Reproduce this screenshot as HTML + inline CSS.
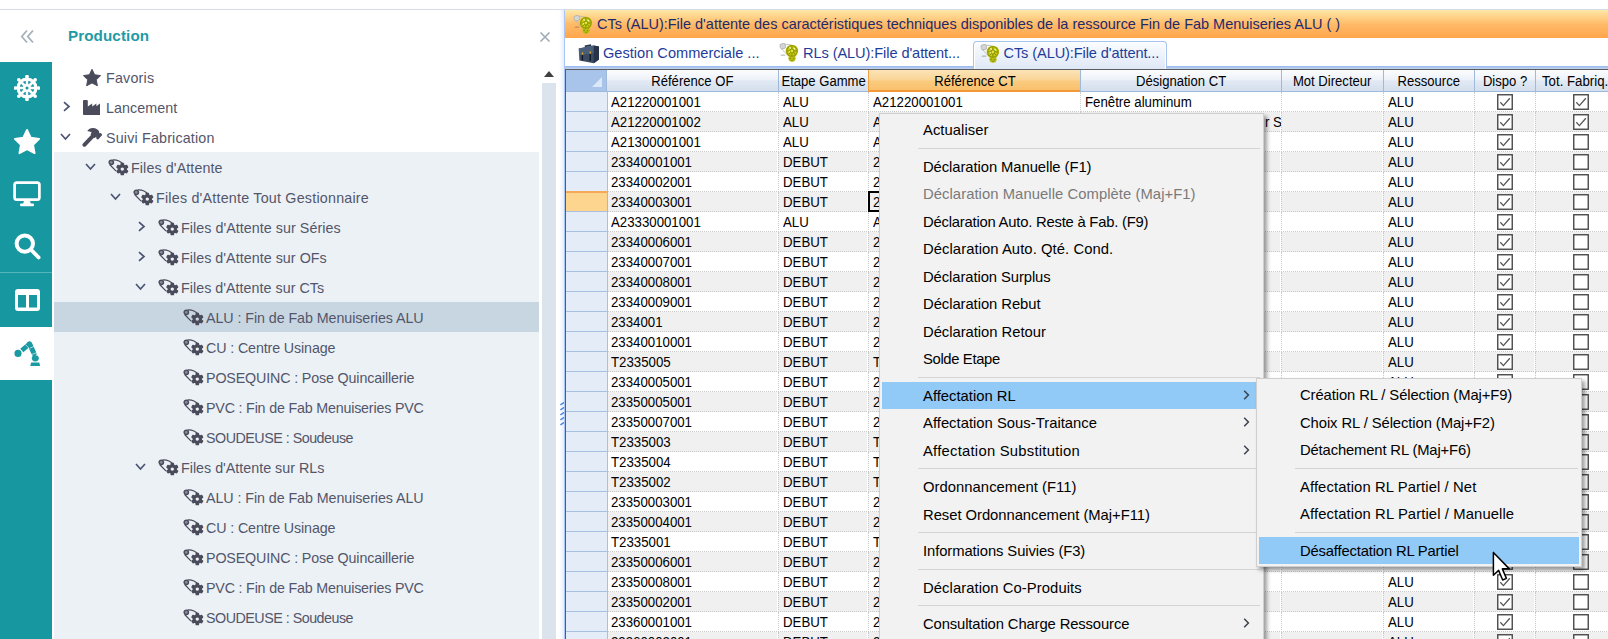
<!DOCTYPE html>
<html><head><meta charset="utf-8"><title>Production</title>
<style>
*{box-sizing:border-box;margin:0;padding:0}
html,body{width:1608px;height:639px;overflow:hidden;background:#fff}
body{position:relative;font-family:"Liberation Sans",sans-serif;font-size:14px;color:#4a4c5b}
.abs{position:absolute}
#topline{left:0;top:9px;width:1608px;height:1px;background:#d3dde8}
/* left nav */
#nav{left:0;top:62px;width:52px;height:577px;background:#17979f}
#nav .sep{position:absolute;left:0;top:210px;width:52px;height:1px;background:#56b5bb}
#nav .act{position:absolute;left:0;top:265px;width:52px;height:53px;background:#fff}
#nav svg{position:absolute}
#title{left:68px;top:26px;font-weight:bold;font-size:15.2px;color:#1f9aa6;line-height:20px;letter-spacing:.1px}
/* tree */
#treebg{left:54px;top:152px;width:485px;height:487px;background:#ecf1f6}
.tr{position:absolute;left:54px;width:485px;height:30px}
.tr.sel{background:#c8d6e2}
.tr span{position:absolute}
.tr .tx{top:1px;line-height:30px;font-size:14.3px;white-space:nowrap;color:#53566a;margin-left:-54px}
.tr .icw{top:0;height:30px;margin-left:-54px;display:flex;align-items:center}
.tr .chw{top:-1px;height:30px;margin-left:-54px;display:flex;align-items:center}
#sbthumb{left:542px;top:83px;width:14px;height:556px;background:#dbe4ed}
#sbarrow{left:544px;top:71px;width:0;height:0;border-left:5px solid transparent;border-right:5px solid transparent;border-bottom:6.5px solid #404040}
/* right panel */
#rp{left:564px;top:10px;width:1044px;height:629px;border-left:1px solid #a9c6f5}
#oh{left:565px;top:10px;width:1043px;height:29px;background:linear-gradient(#ffe8a8 0%,#ffd48a 22%,#ffba68 50%,#ffa54a 96.5%,#ffd3a6 96.6%)}
#oh .t{position:absolute;left:32px;top:0;height:28px;line-height:29px;font-size:14.5px;letter-spacing:-.017px;color:#1f2a6b;white-space:nowrap}
#tabs{left:565px;top:38px;width:1043px;height:28px;background:#fff}
#tabline{left:565px;top:66px;width:1043px;height:3px;background:linear-gradient(#95b8f0,#c4d4ee)}
.tab{position:absolute;top:0;height:30px;line-height:31px;font-size:14.6px;color:#1f3c9c;white-space:nowrap}
#atab{left:973px;top:41px;width:194px;height:28px;border:1px solid #a6c4ee;border-bottom:none;border-radius:4px 4px 0 0;background:linear-gradient(#f8fbff 10%,#dfe8f6);box-shadow:inset 1px 1px 0 #fff,inset -1px 0 0 #fff}
/* grid */
#grid{left:565px;top:69px;width:1043px;height:570px;border-left:1px solid #5c5c5c;border-top:1px solid #5c5c5c;overflow:hidden;background:#fff;box-shadow:inset 1px 1px 0 #d3deef}
#gin{position:absolute;left:-1px;top:-1px;width:1100px;height:600px}
.n{display:inline-block;transform:scaleX(0.86);transform-origin:0 50%;white-space:nowrap;font-size:15.4px;color:#000}
.nc{transform-origin:50% 50%;transform:scaleX(.85)}
.h{position:absolute;top:1px;height:22px;border-left:1px solid #9fb9dc;border-bottom:1px solid #9fb9dc;background:linear-gradient(#fbfcfe 0%,#edf2f9 45%,#e1e9f4 52%,#d4dfed 100%);text-align:center;line-height:22px;overflow:hidden;display:flex;justify-content:center}
.h.ho{background:linear-gradient(#fce4b8 0%,#fbd596 48%,#facb80 55%,#f9c06c 100%);border-left:1px solid #f0a040;border-bottom:2px solid #f29a3a;line-height:22px}
#hsel{position:absolute;left:1px;top:1px;width:41px;height:22px;background:#a9c4ea;border-bottom:1px solid #9fb9dc}
#hsel:after{content:"";position:absolute;right:5px;bottom:4px;border-left:10px solid transparent;border-bottom:10px solid #dce8f7}
.gr{position:absolute;left:0;width:1100px;height:20px}
.gr.alt .c{background:#f0f0f0}
.rh{position:absolute;left:1px;top:0;width:42px;height:20px;background:#e4ecf7;border-bottom:1px solid #a9c0e0;border-right:1.5px solid #a9c0e0;z-index:2}
.rh.cur{background:#fed58f;border-top:2px solid #f5a855;border-right:1.5px solid #f5a855;top:-1px;height:21px}
.c{position:absolute;top:0;height:20px;line-height:20px;padding-left:3.6px;overflow:hidden;border-bottom:1px dotted #cacaca;border-left:1px dotted #cacaca;margin-left:-1px}
.c.cc{padding:0;text-align:center}
.cb{margin-top:2px;margin-left:0}
/* menus */
.menu{background:#f2f2f2;border:1px solid #cfcfcf;box-shadow:3px 3px 4px rgba(0,0,0,.38);padding:2px 2px;font-size:14.8px;color:#000}
.mi{position:relative;height:27.5px;line-height:29px;padding-left:41px;white-space:nowrap}
.sub .mi{padding-left:41px}
.mi.dis{color:#7a7a7a}
.mi.hl{background:#91c9f7}
.mi .ar{position:absolute;right:11.2px;top:8.2px}
.ms{height:9px;position:relative}
.ms:after{content:"";position:absolute;left:36px;right:1px;top:4px;height:1px;background:#d4d4d4}
</style></head><body>
<div id="topline" class="abs"></div>

<!-- collapse icon + title + close -->
<svg class="abs" style="left:20px;top:29px" width="15" height="15" viewBox="0 0 15 15"><path d="M7 1.5L1.8 7.5 7 13.5M13 1.5L7.8 7.5 13 13.5" fill="none" stroke="#a6b0bb" stroke-width="1.8"/></svg>
<div id="title" class="abs">Production</div>
<svg class="abs" style="left:539px;top:31px" width="12" height="12" viewBox="0 0 12 12"><path d="M1.5 1.5l9 9M10.5 1.5l-9 9" stroke="#a0abb7" stroke-width="1.6"/></svg>

<!-- nav bar -->
<div id="nav" class="abs">
 <div class="sep"></div><div class="act"></div>
 <!-- wheel -->
 <svg style="left:14px;top:13px" width="26" height="26" viewBox="-13 -13 26 26">
  <g stroke="#fff" fill="none"><circle r="8.9" stroke-width="3.2"/>
  <g stroke-width="2.5"><path d="M0-12V12M-12 0H12M-8.5-8.5L8.5 8.5M-8.5 8.5L8.5-8.5"/></g></g>
  <circle r="3.9" fill="#fff"/>
  <g fill="#fff"><circle cx="0" cy="-11.5" r="1.8"/><circle cx="0" cy="11.5" r="1.8"/><circle cx="-11.5" cy="0" r="1.8"/><circle cx="11.5" cy="0" r="1.8"/>
  <circle cx="8.2" cy="8.2" r="1.8"/><circle cx="-8.2" cy="8.2" r="1.8"/><circle cx="8.2" cy="-8.2" r="1.8"/><circle cx="-8.2" cy="-8.2" r="1.8"/></g>
  <circle r="1.5" fill="#17979f"/>
 </svg>
 <!-- star -->
 <svg style="left:13px;top:66px" width="28" height="27" viewBox="0 0 24 23"><path d="M12 1.6l3.2 6.6 7.2 1-5.2 5.1 1.3 7.2-6.5-3.4-6.5 3.4 1.3-7.2L1.6 9.2l7.2-1z" fill="#fff" stroke="#fff" stroke-width="1.6" stroke-linejoin="round"/></svg>
 <!-- monitor -->
 <svg style="left:13px;top:119px" width="28" height="26" viewBox="0 0 28 26"><rect x="1.6" y="1.6" width="24.8" height="17" rx="2.2" fill="none" stroke="#fff" stroke-width="2.7"/><path d="M11 19.5h6l.8 3.4h-7.6z" fill="#fff"/><rect x="7" y="22.4" width="14" height="2.8" rx="1.2" fill="#fff"/></svg>
 <!-- search -->
 <svg style="left:14px;top:171px" width="27" height="27" viewBox="0 0 27 27"><circle cx="10.8" cy="10.6" r="8.2" fill="none" stroke="#fff" stroke-width="4"/><path d="M17.4 17.2l7.2 7.2" stroke="#fff" stroke-width="3.8" stroke-linecap="round"/></svg>
 <!-- columns -->
 <svg style="left:15px;top:227px" width="25" height="22" viewBox="0 0 25 22"><rect x="0" y="0" width="25" height="22" rx="3" fill="#fff"/><rect x="3" y="6" width="8" height="12.5" fill="#17979f"/><rect x="14" y="6" width="8" height="12.5" fill="#17979f"/></svg>
 <!-- robot arm -->
 <svg style="left:13px;top:278px" width="28" height="28" viewBox="0 0 28 28">
  <g fill="#1b9aa3" stroke="none"><circle cx="5" cy="13.4" r="3.55"/><ellipse cx="22.3" cy="18.3" rx="3.5" ry="3.1"/><path d="M18.1 22.5h8.2l.8 3.5h-9.8z"/></g>
  <g stroke="#1b9aa3" fill="none"><path d="M8.8 10.5L16.4 4" stroke-width="4.8"/><path d="M16.6 3.8L21 13.6" stroke-width="5" stroke-linecap="round"/></g>
  <g stroke="#fff" stroke-width=".7" opacity=".85"><path d="M12.4 4.6l3.6 3.6M16.6 8.4l4.6-2.2M17.6 14.9l6.4-2.4"/></g>
 </svg>
</div>

<!-- tree -->
<div id="treebg" class="abs"></div>
<div class="tr" style="top:62px"><span class="icw" style="left:82px"><svg class="ti" width="20" height="19" viewBox="0 0 24 23"><path d="M12 1.6l3.2 6.6 7.2 1-5.2 5.1 1.3 7.2-6.5-3.4-6.5 3.4 1.3-7.2L1.6 9.2l7.2-1z" fill="#4a4c5b" stroke="#4a4c5b" stroke-width="1.2" stroke-linejoin="round"/></svg></span><span class="tx" style="left:106px;letter-spacing:0.2px">Favoris</span></div>
<div class="tr" style="top:92px"><span class="chw" style="left:61.5px"><svg class="ch" width="9" height="11" viewBox="0 0 9 11"><path d="M2 1.2l5 4.3-5 4.3" fill="none" stroke="#4b5473" stroke-width="1.7"/></svg></span><span class="icw" style="left:82px"><svg class="ti" style="margin-left:.8px;margin-top:1px" width="17.5" height="15" viewBox="0 0 17.5 15"><path d="M.9 0h3a.9.9 0 0 1 .9.9V6.4L9.2 3.5v2.9L13.4 3.6v2.7L17.5 3.1V14.1a.9.9 0 0 1-.9.9H.9a.9.9 0 0 1-.9-.9V.9A.9.9 0 0 1 .9 0z" fill="#4a4c5b"/></svg></span><span class="tx" style="left:106px;letter-spacing:0.05px">Lancement</span></div>
<div class="tr" style="top:122px"><span class="chw" style="left:60px"><svg class="ch" width="11" height="9" viewBox="0 0 11 9"><path d="M1 2l4.5 5 4.5-5" fill="none" stroke="#4b5473" stroke-width="1.7"/></svg></span><span class="icw" style="left:82px"><svg class="ti" style="margin-top:1px" width="20" height="19" viewBox="0 0 20 19"><path d="M11.4 7.4L2.4 16.8" stroke="#4a4c5b" stroke-width="3.9" stroke-linecap="round"/><path d="M6.2 2.7C8.5.5 12.6-.2 15.6 2.5l1 1.3-.2 1.3 1 1 1-.4 1.1 1.1-3.6 4.1-1.1-1 .3-1.1-.9-1-1.6 1.6-3.3-3.2 1.3-1.6C9.6 3.5 8 2.9 6.2 2.7z" fill="#4a4c5b" stroke="#4a4c5b" stroke-width="1.3" stroke-linejoin="round"/></svg></span><span class="tx" style="left:106px;letter-spacing:0.17px">Suivi Fabrication</span></div>
<div class="tr" style="top:152px"><span class="chw" style="left:85px"><svg class="ch" width="11" height="9" viewBox="0 0 11 9"><path d="M1 2l4.5 5 4.5-5" fill="none" stroke="#4b5473" stroke-width="1.7"/></svg></span><span class="icw" style="left:107px"><svg class="ti" width="22" height="20" viewBox="0 0 22 20"><path d="M6.0 2.9 Q12 2.6 16.6 7.4" fill="none" stroke="#4a4c5b" stroke-width="1.25" stroke-linecap="round"/><path d="M2.9 7.8 L8.6 13.6" fill="none" stroke="#4a4c5b" stroke-width="1.25" stroke-linecap="round"/><circle cx="4.3" cy="5.3" r="2.15" fill="#8a8d9a" stroke="#4a4c5b" stroke-width="1.5"/><path d="M14.02 8.31 L14.31 6.59 L16.29 6.59 L16.58 8.31 L17.95 9.10 L19.58 8.49 L20.57 10.20 L19.22 11.31 L19.22 12.89 L20.57 14.00 L19.58 15.71 L17.95 15.10 L16.58 15.89 L16.29 17.61 L14.31 17.61 L14.02 15.89 L12.65 15.10 L11.02 15.71 L10.03 14.00 L11.38 12.89 L11.38 11.31 L10.03 10.20 L11.02 8.49 L12.65 9.10Z" fill="#4a4c5b" stroke="#4a4c5b" stroke-width="1.5" stroke-linejoin="round"/><circle cx="15.3" cy="12.1" r="1.7" fill="#ecf1f6"/></svg></span><span class="tx" style="left:131px;letter-spacing:0.1px">Files d'Attente</span></div>
<div class="tr" style="top:182px"><span class="chw" style="left:110px"><svg class="ch" width="11" height="9" viewBox="0 0 11 9"><path d="M1 2l4.5 5 4.5-5" fill="none" stroke="#4b5473" stroke-width="1.7"/></svg></span><span class="icw" style="left:132px"><svg class="ti" width="22" height="20" viewBox="0 0 22 20"><path d="M6.0 2.9 Q12 2.6 16.6 7.4" fill="none" stroke="#4a4c5b" stroke-width="1.25" stroke-linecap="round"/><path d="M2.9 7.8 L8.6 13.6" fill="none" stroke="#4a4c5b" stroke-width="1.25" stroke-linecap="round"/><circle cx="4.3" cy="5.3" r="2.15" fill="#8a8d9a" stroke="#4a4c5b" stroke-width="1.5"/><path d="M14.02 8.31 L14.31 6.59 L16.29 6.59 L16.58 8.31 L17.95 9.10 L19.58 8.49 L20.57 10.20 L19.22 11.31 L19.22 12.89 L20.57 14.00 L19.58 15.71 L17.95 15.10 L16.58 15.89 L16.29 17.61 L14.31 17.61 L14.02 15.89 L12.65 15.10 L11.02 15.71 L10.03 14.00 L11.38 12.89 L11.38 11.31 L10.03 10.20 L11.02 8.49 L12.65 9.10Z" fill="#4a4c5b" stroke="#4a4c5b" stroke-width="1.5" stroke-linejoin="round"/><circle cx="15.3" cy="12.1" r="1.7" fill="#ecf1f6"/></svg></span><span class="tx" style="left:156px;letter-spacing:0.215px">Files d'Attente Tout Gestionnaire</span></div>
<div class="tr" style="top:212px"><span class="chw" style="left:136.5px"><svg class="ch" width="9" height="11" viewBox="0 0 9 11"><path d="M2 1.2l5 4.3-5 4.3" fill="none" stroke="#4b5473" stroke-width="1.7"/></svg></span><span class="icw" style="left:157px"><svg class="ti" width="22" height="20" viewBox="0 0 22 20"><path d="M6.0 2.9 Q12 2.6 16.6 7.4" fill="none" stroke="#4a4c5b" stroke-width="1.25" stroke-linecap="round"/><path d="M2.9 7.8 L8.6 13.6" fill="none" stroke="#4a4c5b" stroke-width="1.25" stroke-linecap="round"/><circle cx="4.3" cy="5.3" r="2.15" fill="#8a8d9a" stroke="#4a4c5b" stroke-width="1.5"/><path d="M14.02 8.31 L14.31 6.59 L16.29 6.59 L16.58 8.31 L17.95 9.10 L19.58 8.49 L20.57 10.20 L19.22 11.31 L19.22 12.89 L20.57 14.00 L19.58 15.71 L17.95 15.10 L16.58 15.89 L16.29 17.61 L14.31 17.61 L14.02 15.89 L12.65 15.10 L11.02 15.71 L10.03 14.00 L11.38 12.89 L11.38 11.31 L10.03 10.20 L11.02 8.49 L12.65 9.10Z" fill="#4a4c5b" stroke="#4a4c5b" stroke-width="1.5" stroke-linejoin="round"/><circle cx="15.3" cy="12.1" r="1.7" fill="#ecf1f6"/></svg></span><span class="tx" style="left:181px;letter-spacing:0.045px">Files d'Attente sur Séries</span></div>
<div class="tr" style="top:242px"><span class="chw" style="left:136.5px"><svg class="ch" width="9" height="11" viewBox="0 0 9 11"><path d="M2 1.2l5 4.3-5 4.3" fill="none" stroke="#4b5473" stroke-width="1.7"/></svg></span><span class="icw" style="left:157px"><svg class="ti" width="22" height="20" viewBox="0 0 22 20"><path d="M6.0 2.9 Q12 2.6 16.6 7.4" fill="none" stroke="#4a4c5b" stroke-width="1.25" stroke-linecap="round"/><path d="M2.9 7.8 L8.6 13.6" fill="none" stroke="#4a4c5b" stroke-width="1.25" stroke-linecap="round"/><circle cx="4.3" cy="5.3" r="2.15" fill="#8a8d9a" stroke="#4a4c5b" stroke-width="1.5"/><path d="M14.02 8.31 L14.31 6.59 L16.29 6.59 L16.58 8.31 L17.95 9.10 L19.58 8.49 L20.57 10.20 L19.22 11.31 L19.22 12.89 L20.57 14.00 L19.58 15.71 L17.95 15.10 L16.58 15.89 L16.29 17.61 L14.31 17.61 L14.02 15.89 L12.65 15.10 L11.02 15.71 L10.03 14.00 L11.38 12.89 L11.38 11.31 L10.03 10.20 L11.02 8.49 L12.65 9.10Z" fill="#4a4c5b" stroke="#4a4c5b" stroke-width="1.5" stroke-linejoin="round"/><circle cx="15.3" cy="12.1" r="1.7" fill="#ecf1f6"/></svg></span><span class="tx" style="left:181px;letter-spacing:0.035px">Files d'Attente sur OFs</span></div>
<div class="tr" style="top:272px"><span class="chw" style="left:135px"><svg class="ch" width="11" height="9" viewBox="0 0 11 9"><path d="M1 2l4.5 5 4.5-5" fill="none" stroke="#4b5473" stroke-width="1.7"/></svg></span><span class="icw" style="left:157px"><svg class="ti" width="22" height="20" viewBox="0 0 22 20"><path d="M6.0 2.9 Q12 2.6 16.6 7.4" fill="none" stroke="#4a4c5b" stroke-width="1.25" stroke-linecap="round"/><path d="M2.9 7.8 L8.6 13.6" fill="none" stroke="#4a4c5b" stroke-width="1.25" stroke-linecap="round"/><circle cx="4.3" cy="5.3" r="2.15" fill="#8a8d9a" stroke="#4a4c5b" stroke-width="1.5"/><path d="M14.02 8.31 L14.31 6.59 L16.29 6.59 L16.58 8.31 L17.95 9.10 L19.58 8.49 L20.57 10.20 L19.22 11.31 L19.22 12.89 L20.57 14.00 L19.58 15.71 L17.95 15.10 L16.58 15.89 L16.29 17.61 L14.31 17.61 L14.02 15.89 L12.65 15.10 L11.02 15.71 L10.03 14.00 L11.38 12.89 L11.38 11.31 L10.03 10.20 L11.02 8.49 L12.65 9.10Z" fill="#4a4c5b" stroke="#4a4c5b" stroke-width="1.5" stroke-linejoin="round"/><circle cx="15.3" cy="12.1" r="1.7" fill="#ecf1f6"/></svg></span><span class="tx" style="left:181px;letter-spacing:0.025px">Files d'Attente sur CTs</span></div>
<div class="tr sel" style="top:302px"><span class="icw" style="left:182px"><svg class="ti" width="22" height="20" viewBox="0 0 22 20"><path d="M6.0 2.9 Q12 2.6 16.6 7.4" fill="none" stroke="#4a4c5b" stroke-width="1.25" stroke-linecap="round"/><path d="M2.9 7.8 L8.6 13.6" fill="none" stroke="#4a4c5b" stroke-width="1.25" stroke-linecap="round"/><circle cx="4.3" cy="5.3" r="2.15" fill="#8a8d9a" stroke="#4a4c5b" stroke-width="1.5"/><path d="M14.02 8.31 L14.31 6.59 L16.29 6.59 L16.58 8.31 L17.95 9.10 L19.58 8.49 L20.57 10.20 L19.22 11.31 L19.22 12.89 L20.57 14.00 L19.58 15.71 L17.95 15.10 L16.58 15.89 L16.29 17.61 L14.31 17.61 L14.02 15.89 L12.65 15.10 L11.02 15.71 L10.03 14.00 L11.38 12.89 L11.38 11.31 L10.03 10.20 L11.02 8.49 L12.65 9.10Z" fill="#4a4c5b" stroke="#4a4c5b" stroke-width="1.5" stroke-linejoin="round"/><circle cx="15.3" cy="12.1" r="1.7" fill="#c8d6e2"/></svg></span><span class="tx" style="left:206px;letter-spacing:-0.08px">ALU : Fin de Fab Menuiseries ALU</span></div>
<div class="tr" style="top:332px"><span class="icw" style="left:182px"><svg class="ti" width="22" height="20" viewBox="0 0 22 20"><path d="M6.0 2.9 Q12 2.6 16.6 7.4" fill="none" stroke="#4a4c5b" stroke-width="1.25" stroke-linecap="round"/><path d="M2.9 7.8 L8.6 13.6" fill="none" stroke="#4a4c5b" stroke-width="1.25" stroke-linecap="round"/><circle cx="4.3" cy="5.3" r="2.15" fill="#8a8d9a" stroke="#4a4c5b" stroke-width="1.5"/><path d="M14.02 8.31 L14.31 6.59 L16.29 6.59 L16.58 8.31 L17.95 9.10 L19.58 8.49 L20.57 10.20 L19.22 11.31 L19.22 12.89 L20.57 14.00 L19.58 15.71 L17.95 15.10 L16.58 15.89 L16.29 17.61 L14.31 17.61 L14.02 15.89 L12.65 15.10 L11.02 15.71 L10.03 14.00 L11.38 12.89 L11.38 11.31 L10.03 10.20 L11.02 8.49 L12.65 9.10Z" fill="#4a4c5b" stroke="#4a4c5b" stroke-width="1.5" stroke-linejoin="round"/><circle cx="15.3" cy="12.1" r="1.7" fill="#ecf1f6"/></svg></span><span class="tx" style="left:206px;letter-spacing:-0.135px">CU : Centre Usinage</span></div>
<div class="tr" style="top:362px"><span class="icw" style="left:182px"><svg class="ti" width="22" height="20" viewBox="0 0 22 20"><path d="M6.0 2.9 Q12 2.6 16.6 7.4" fill="none" stroke="#4a4c5b" stroke-width="1.25" stroke-linecap="round"/><path d="M2.9 7.8 L8.6 13.6" fill="none" stroke="#4a4c5b" stroke-width="1.25" stroke-linecap="round"/><circle cx="4.3" cy="5.3" r="2.15" fill="#8a8d9a" stroke="#4a4c5b" stroke-width="1.5"/><path d="M14.02 8.31 L14.31 6.59 L16.29 6.59 L16.58 8.31 L17.95 9.10 L19.58 8.49 L20.57 10.20 L19.22 11.31 L19.22 12.89 L20.57 14.00 L19.58 15.71 L17.95 15.10 L16.58 15.89 L16.29 17.61 L14.31 17.61 L14.02 15.89 L12.65 15.10 L11.02 15.71 L10.03 14.00 L11.38 12.89 L11.38 11.31 L10.03 10.20 L11.02 8.49 L12.65 9.10Z" fill="#4a4c5b" stroke="#4a4c5b" stroke-width="1.5" stroke-linejoin="round"/><circle cx="15.3" cy="12.1" r="1.7" fill="#ecf1f6"/></svg></span><span class="tx" style="left:206px;letter-spacing:-0.157px">POSEQUINC : Pose Quincaillerie</span></div>
<div class="tr" style="top:392px"><span class="icw" style="left:182px"><svg class="ti" width="22" height="20" viewBox="0 0 22 20"><path d="M6.0 2.9 Q12 2.6 16.6 7.4" fill="none" stroke="#4a4c5b" stroke-width="1.25" stroke-linecap="round"/><path d="M2.9 7.8 L8.6 13.6" fill="none" stroke="#4a4c5b" stroke-width="1.25" stroke-linecap="round"/><circle cx="4.3" cy="5.3" r="2.15" fill="#8a8d9a" stroke="#4a4c5b" stroke-width="1.5"/><path d="M14.02 8.31 L14.31 6.59 L16.29 6.59 L16.58 8.31 L17.95 9.10 L19.58 8.49 L20.57 10.20 L19.22 11.31 L19.22 12.89 L20.57 14.00 L19.58 15.71 L17.95 15.10 L16.58 15.89 L16.29 17.61 L14.31 17.61 L14.02 15.89 L12.65 15.10 L11.02 15.71 L10.03 14.00 L11.38 12.89 L11.38 11.31 L10.03 10.20 L11.02 8.49 L12.65 9.10Z" fill="#4a4c5b" stroke="#4a4c5b" stroke-width="1.5" stroke-linejoin="round"/><circle cx="15.3" cy="12.1" r="1.7" fill="#ecf1f6"/></svg></span><span class="tx" style="left:206px;letter-spacing:-0.2px">PVC : Fin de Fab Menuiseries PVC</span></div>
<div class="tr" style="top:422px"><span class="icw" style="left:182px"><svg class="ti" width="22" height="20" viewBox="0 0 22 20"><path d="M6.0 2.9 Q12 2.6 16.6 7.4" fill="none" stroke="#4a4c5b" stroke-width="1.25" stroke-linecap="round"/><path d="M2.9 7.8 L8.6 13.6" fill="none" stroke="#4a4c5b" stroke-width="1.25" stroke-linecap="round"/><circle cx="4.3" cy="5.3" r="2.15" fill="#8a8d9a" stroke="#4a4c5b" stroke-width="1.5"/><path d="M14.02 8.31 L14.31 6.59 L16.29 6.59 L16.58 8.31 L17.95 9.10 L19.58 8.49 L20.57 10.20 L19.22 11.31 L19.22 12.89 L20.57 14.00 L19.58 15.71 L17.95 15.10 L16.58 15.89 L16.29 17.61 L14.31 17.61 L14.02 15.89 L12.65 15.10 L11.02 15.71 L10.03 14.00 L11.38 12.89 L11.38 11.31 L10.03 10.20 L11.02 8.49 L12.65 9.10Z" fill="#4a4c5b" stroke="#4a4c5b" stroke-width="1.5" stroke-linejoin="round"/><circle cx="15.3" cy="12.1" r="1.7" fill="#ecf1f6"/></svg></span><span class="tx" style="left:206px;letter-spacing:-0.5px">SOUDEUSE : Soudeuse</span></div>
<div class="tr" style="top:452px"><span class="chw" style="left:135px"><svg class="ch" width="11" height="9" viewBox="0 0 11 9"><path d="M1 2l4.5 5 4.5-5" fill="none" stroke="#4b5473" stroke-width="1.7"/></svg></span><span class="icw" style="left:157px"><svg class="ti" width="22" height="20" viewBox="0 0 22 20"><path d="M6.0 2.9 Q12 2.6 16.6 7.4" fill="none" stroke="#4a4c5b" stroke-width="1.25" stroke-linecap="round"/><path d="M2.9 7.8 L8.6 13.6" fill="none" stroke="#4a4c5b" stroke-width="1.25" stroke-linecap="round"/><circle cx="4.3" cy="5.3" r="2.15" fill="#8a8d9a" stroke="#4a4c5b" stroke-width="1.5"/><path d="M14.02 8.31 L14.31 6.59 L16.29 6.59 L16.58 8.31 L17.95 9.10 L19.58 8.49 L20.57 10.20 L19.22 11.31 L19.22 12.89 L20.57 14.00 L19.58 15.71 L17.95 15.10 L16.58 15.89 L16.29 17.61 L14.31 17.61 L14.02 15.89 L12.65 15.10 L11.02 15.71 L10.03 14.00 L11.38 12.89 L11.38 11.31 L10.03 10.20 L11.02 8.49 L12.65 9.10Z" fill="#4a4c5b" stroke="#4a4c5b" stroke-width="1.5" stroke-linejoin="round"/><circle cx="15.3" cy="12.1" r="1.7" fill="#ecf1f6"/></svg></span><span class="tx" style="left:181px;letter-spacing:0px">Files d'Attente sur RLs</span></div>
<div class="tr" style="top:482px"><span class="icw" style="left:182px"><svg class="ti" width="22" height="20" viewBox="0 0 22 20"><path d="M6.0 2.9 Q12 2.6 16.6 7.4" fill="none" stroke="#4a4c5b" stroke-width="1.25" stroke-linecap="round"/><path d="M2.9 7.8 L8.6 13.6" fill="none" stroke="#4a4c5b" stroke-width="1.25" stroke-linecap="round"/><circle cx="4.3" cy="5.3" r="2.15" fill="#8a8d9a" stroke="#4a4c5b" stroke-width="1.5"/><path d="M14.02 8.31 L14.31 6.59 L16.29 6.59 L16.58 8.31 L17.95 9.10 L19.58 8.49 L20.57 10.20 L19.22 11.31 L19.22 12.89 L20.57 14.00 L19.58 15.71 L17.95 15.10 L16.58 15.89 L16.29 17.61 L14.31 17.61 L14.02 15.89 L12.65 15.10 L11.02 15.71 L10.03 14.00 L11.38 12.89 L11.38 11.31 L10.03 10.20 L11.02 8.49 L12.65 9.10Z" fill="#4a4c5b" stroke="#4a4c5b" stroke-width="1.5" stroke-linejoin="round"/><circle cx="15.3" cy="12.1" r="1.7" fill="#ecf1f6"/></svg></span><span class="tx" style="left:206px;letter-spacing:-0.08px">ALU : Fin de Fab Menuiseries ALU</span></div>
<div class="tr" style="top:512px"><span class="icw" style="left:182px"><svg class="ti" width="22" height="20" viewBox="0 0 22 20"><path d="M6.0 2.9 Q12 2.6 16.6 7.4" fill="none" stroke="#4a4c5b" stroke-width="1.25" stroke-linecap="round"/><path d="M2.9 7.8 L8.6 13.6" fill="none" stroke="#4a4c5b" stroke-width="1.25" stroke-linecap="round"/><circle cx="4.3" cy="5.3" r="2.15" fill="#8a8d9a" stroke="#4a4c5b" stroke-width="1.5"/><path d="M14.02 8.31 L14.31 6.59 L16.29 6.59 L16.58 8.31 L17.95 9.10 L19.58 8.49 L20.57 10.20 L19.22 11.31 L19.22 12.89 L20.57 14.00 L19.58 15.71 L17.95 15.10 L16.58 15.89 L16.29 17.61 L14.31 17.61 L14.02 15.89 L12.65 15.10 L11.02 15.71 L10.03 14.00 L11.38 12.89 L11.38 11.31 L10.03 10.20 L11.02 8.49 L12.65 9.10Z" fill="#4a4c5b" stroke="#4a4c5b" stroke-width="1.5" stroke-linejoin="round"/><circle cx="15.3" cy="12.1" r="1.7" fill="#ecf1f6"/></svg></span><span class="tx" style="left:206px;letter-spacing:-0.135px">CU : Centre Usinage</span></div>
<div class="tr" style="top:542px"><span class="icw" style="left:182px"><svg class="ti" width="22" height="20" viewBox="0 0 22 20"><path d="M6.0 2.9 Q12 2.6 16.6 7.4" fill="none" stroke="#4a4c5b" stroke-width="1.25" stroke-linecap="round"/><path d="M2.9 7.8 L8.6 13.6" fill="none" stroke="#4a4c5b" stroke-width="1.25" stroke-linecap="round"/><circle cx="4.3" cy="5.3" r="2.15" fill="#8a8d9a" stroke="#4a4c5b" stroke-width="1.5"/><path d="M14.02 8.31 L14.31 6.59 L16.29 6.59 L16.58 8.31 L17.95 9.10 L19.58 8.49 L20.57 10.20 L19.22 11.31 L19.22 12.89 L20.57 14.00 L19.58 15.71 L17.95 15.10 L16.58 15.89 L16.29 17.61 L14.31 17.61 L14.02 15.89 L12.65 15.10 L11.02 15.71 L10.03 14.00 L11.38 12.89 L11.38 11.31 L10.03 10.20 L11.02 8.49 L12.65 9.10Z" fill="#4a4c5b" stroke="#4a4c5b" stroke-width="1.5" stroke-linejoin="round"/><circle cx="15.3" cy="12.1" r="1.7" fill="#ecf1f6"/></svg></span><span class="tx" style="left:206px;letter-spacing:-0.157px">POSEQUINC : Pose Quincaillerie</span></div>
<div class="tr" style="top:572px"><span class="icw" style="left:182px"><svg class="ti" width="22" height="20" viewBox="0 0 22 20"><path d="M6.0 2.9 Q12 2.6 16.6 7.4" fill="none" stroke="#4a4c5b" stroke-width="1.25" stroke-linecap="round"/><path d="M2.9 7.8 L8.6 13.6" fill="none" stroke="#4a4c5b" stroke-width="1.25" stroke-linecap="round"/><circle cx="4.3" cy="5.3" r="2.15" fill="#8a8d9a" stroke="#4a4c5b" stroke-width="1.5"/><path d="M14.02 8.31 L14.31 6.59 L16.29 6.59 L16.58 8.31 L17.95 9.10 L19.58 8.49 L20.57 10.20 L19.22 11.31 L19.22 12.89 L20.57 14.00 L19.58 15.71 L17.95 15.10 L16.58 15.89 L16.29 17.61 L14.31 17.61 L14.02 15.89 L12.65 15.10 L11.02 15.71 L10.03 14.00 L11.38 12.89 L11.38 11.31 L10.03 10.20 L11.02 8.49 L12.65 9.10Z" fill="#4a4c5b" stroke="#4a4c5b" stroke-width="1.5" stroke-linejoin="round"/><circle cx="15.3" cy="12.1" r="1.7" fill="#ecf1f6"/></svg></span><span class="tx" style="left:206px;letter-spacing:-0.2px">PVC : Fin de Fab Menuiseries PVC</span></div>
<div class="tr" style="top:602px"><span class="icw" style="left:182px"><svg class="ti" width="22" height="20" viewBox="0 0 22 20"><path d="M6.0 2.9 Q12 2.6 16.6 7.4" fill="none" stroke="#4a4c5b" stroke-width="1.25" stroke-linecap="round"/><path d="M2.9 7.8 L8.6 13.6" fill="none" stroke="#4a4c5b" stroke-width="1.25" stroke-linecap="round"/><circle cx="4.3" cy="5.3" r="2.15" fill="#8a8d9a" stroke="#4a4c5b" stroke-width="1.5"/><path d="M14.02 8.31 L14.31 6.59 L16.29 6.59 L16.58 8.31 L17.95 9.10 L19.58 8.49 L20.57 10.20 L19.22 11.31 L19.22 12.89 L20.57 14.00 L19.58 15.71 L17.95 15.10 L16.58 15.89 L16.29 17.61 L14.31 17.61 L14.02 15.89 L12.65 15.10 L11.02 15.71 L10.03 14.00 L11.38 12.89 L11.38 11.31 L10.03 10.20 L11.02 8.49 L12.65 9.10Z" fill="#4a4c5b" stroke="#4a4c5b" stroke-width="1.5" stroke-linejoin="round"/><circle cx="15.3" cy="12.1" r="1.7" fill="#ecf1f6"/></svg></span><span class="tx" style="left:206px;letter-spacing:-0.5px">SOUDEUSE : Soudeuse</span></div>
<div class="tr" style="top:632px"><span class="chw" style="left:111.5px"><svg class="ch" width="9" height="11" viewBox="0 0 9 11"><path d="M2 1.2l5 4.3-5 4.3" fill="none" stroke="#4b5473" stroke-width="1.7"/></svg></span><span class="icw" style="left:132px"><svg class="ti" width="22" height="20" viewBox="0 0 22 20"><path d="M6.0 2.9 Q12 2.6 16.6 7.4" fill="none" stroke="#4a4c5b" stroke-width="1.25" stroke-linecap="round"/><path d="M2.9 7.8 L8.6 13.6" fill="none" stroke="#4a4c5b" stroke-width="1.25" stroke-linecap="round"/><circle cx="4.3" cy="5.3" r="2.15" fill="#8a8d9a" stroke="#4a4c5b" stroke-width="1.5"/><path d="M14.02 8.31 L14.31 6.59 L16.29 6.59 L16.58 8.31 L17.95 9.10 L19.58 8.49 L20.57 10.20 L19.22 11.31 L19.22 12.89 L20.57 14.00 L19.58 15.71 L17.95 15.10 L16.58 15.89 L16.29 17.61 L14.31 17.61 L14.02 15.89 L12.65 15.10 L11.02 15.71 L10.03 14.00 L11.38 12.89 L11.38 11.31 L10.03 10.20 L11.02 8.49 L12.65 9.10Z" fill="#4a4c5b" stroke="#4a4c5b" stroke-width="1.5" stroke-linejoin="round"/><circle cx="15.3" cy="12.1" r="1.7" fill="#ecf1f6"/></svg></span><span class="tx" style="left:156px;letter-spacing:0.2px">Files d'Attente Mon Gestionnaire</span></div>
<div id="sbthumb" class="abs"></div>
<div id="sbarrow" class="abs"></div>
<!-- splitter dots -->
<div class="abs" style="left:559px;top:10px;width:5px;height:629px;background:linear-gradient(to right,#fff,#e6eefc)"></div>
<svg class="abs" style="left:560px;top:401px" width="5" height="26" viewBox="0 0 5 26"><path d="M.8 3.6l3-2M.8 8.6l3-2M.8 13.6l3-2M.8 18.6l3-2M.8 23.6l3-2" stroke="#4f86dc" stroke-width="1.3" stroke-linecap="round"/></svg>

<!-- right panel -->
<div id="rp" class="abs"></div>
<div id="oh" class="abs"><span class="abs" style="left:8px;top:5px"><svg width="20" height="20" viewBox="0 0 20 20"><ellipse cx="4" cy="12.2" rx="2.6" ry=".9" fill="rgba(90,70,50,.28)"/><path d="M2.2 5.2L8.4 12.2M6 1.2L12.5 2" stroke="#b4b4b4" stroke-width=".8" fill="none"/><rect x="1.2" y=".7" width="5.2" height="5" rx="1.4" fill="#d6d6d6" stroke="#a8a8a8" stroke-width=".7" transform="rotate(-12 3.8 3.2)"/><circle cx="13" cy="15.2" r="3.6" fill="#b9be14"/><g fill="#8f9408"><circle cx="11.2" cy="15.4" r=".8"/><circle cx="14.6" cy="15.8" r=".8"/><circle cx="13" cy="17.4" r=".8"/><circle cx="15.4" cy="13.6" r=".7"/></g><circle cx="12.9" cy="8" r="6.2" fill="#c8cd10"/><circle cx="12.9" cy="8" r="5.3" fill="none" stroke="#969b06" stroke-width="1.2"/><path d="M12.9 3v10M8 8h9.8M9.4 4.5l7 7M16.4 4.5l-7 7" stroke="#8b9004" stroke-width="1"/><circle cx="12.9" cy="8" r="2" fill="#dfe43a" stroke="#858a04" stroke-width=".9"/><g fill="#f4f7b0"><circle cx="11" cy="5" r=".9"/><circle cx="15.2" cy="5.6" r=".9"/><circle cx="10.4" cy="8.8" r=".7"/></g></svg></span><span class="t">CTs (ALU):File d'attente des caractéristiques techniques disponibles de la ressource Fin de Fab Menuiseries ALU ( )</span></div>
<div id="tabs" class="abs">
 <span class="abs" style="left:13px;top:5px"><svg width="22" height="21" viewBox="0 0 22 21"><path d="M6.6 2.6l6.2-1.4.6 1.8-6.4 1.2z" fill="#27354a"/><path d="M.8 5.6L15.6 2.4 21 3.6v12.8l-5.2 3.8L1.4 17.6z" fill="#3b4b63"/><path d="M15.6 2.4L21 3.6v12.8l-5.2 3.8z" fill="#263348"/><path d="M.8 5.6L15.6 2.4l.1 7.6L1 12.4z" fill="#4a5d79"/><path d="M4.4 9v8.6M12.2 8v10" stroke="#10161f" stroke-width="1.3"/><rect x="3.6" y="9.2" width="1.7" height="2.6" fill="#c9a33c"/><rect x="11.4" y="8.2" width="1.7" height="2.6" fill="#c9a33c"/></svg></span><span class="tab" style="left:38px">Gestion Commerciale ...</span>
 <span class="abs" style="left:214px;top:5px"><svg width="20" height="20" viewBox="0 0 20 20"><ellipse cx="4" cy="12.2" rx="2.6" ry=".9" fill="rgba(90,70,50,.28)"/><path d="M2.2 5.2L8.4 12.2M6 1.2L12.5 2" stroke="#b4b4b4" stroke-width=".8" fill="none"/><rect x="1.2" y=".7" width="5.2" height="5" rx="1.4" fill="#d6d6d6" stroke="#a8a8a8" stroke-width=".7" transform="rotate(-12 3.8 3.2)"/><circle cx="13" cy="15.2" r="3.6" fill="#b9be14"/><g fill="#8f9408"><circle cx="11.2" cy="15.4" r=".8"/><circle cx="14.6" cy="15.8" r=".8"/><circle cx="13" cy="17.4" r=".8"/><circle cx="15.4" cy="13.6" r=".7"/></g><circle cx="12.9" cy="8" r="6.2" fill="#c8cd10"/><circle cx="12.9" cy="8" r="5.3" fill="none" stroke="#969b06" stroke-width="1.2"/><path d="M12.9 3v10M8 8h9.8M9.4 4.5l7 7M16.4 4.5l-7 7" stroke="#8b9004" stroke-width="1"/><circle cx="12.9" cy="8" r="2" fill="#dfe43a" stroke="#858a04" stroke-width=".9"/><g fill="#f4f7b0"><circle cx="11" cy="5" r=".9"/><circle cx="15.2" cy="5.6" r=".9"/><circle cx="10.4" cy="8.8" r=".7"/></g></svg></span><span class="tab" style="left:238px;letter-spacing:-.09px">RLs (ALU):File d'attent...</span>
</div>
<div id="tabline" class="abs"></div>
<div id="atab" class="abs"><span class="abs" style="left:5.5px;top:1.7px"><svg width="20" height="20" viewBox="0 0 20 20"><ellipse cx="4" cy="12.2" rx="2.6" ry=".9" fill="rgba(90,70,50,.28)"/><path d="M2.2 5.2L8.4 12.2M6 1.2L12.5 2" stroke="#b4b4b4" stroke-width=".8" fill="none"/><rect x="1.2" y=".7" width="5.2" height="5" rx="1.4" fill="#d6d6d6" stroke="#a8a8a8" stroke-width=".7" transform="rotate(-12 3.8 3.2)"/><circle cx="13" cy="15.2" r="3.6" fill="#b9be14"/><g fill="#8f9408"><circle cx="11.2" cy="15.4" r=".8"/><circle cx="14.6" cy="15.8" r=".8"/><circle cx="13" cy="17.4" r=".8"/><circle cx="15.4" cy="13.6" r=".7"/></g><circle cx="12.9" cy="8" r="6.2" fill="#c8cd10"/><circle cx="12.9" cy="8" r="5.3" fill="none" stroke="#969b06" stroke-width="1.2"/><path d="M12.9 3v10M8 8h9.8M9.4 4.5l7 7M16.4 4.5l-7 7" stroke="#8b9004" stroke-width="1"/><circle cx="12.9" cy="8" r="2" fill="#dfe43a" stroke="#858a04" stroke-width=".9"/><g fill="#f4f7b0"><circle cx="11" cy="5" r=".9"/><circle cx="15.2" cy="5.6" r=".9"/><circle cx="10.4" cy="8.8" r=".7"/></g></svg></span><span class="tab" style="left:29.5px;top:-4px;letter-spacing:-.107px">CTs (ALU):File d'attent...</span></div>

<div id="grid" class="abs"><div id="gin">
 <div id="hsel"></div>
 <div class="h" style="left:41px;width:172px"><span class="n nc">Référence OF</span></div>
<div class="h" style="left:213px;width:90px"><span class="n nc">Etape Gamme</span></div>
<div class="h ho" style="left:303px;width:212px"><span class="n nc">Référence CT</span></div>
<div class="h" style="left:515px;width:201px"><span class="n nc">Désignation CT</span></div>
<div class="h" style="left:716px;width:102px"><span class="n nc">Mot Directeur</span></div>
<div class="h" style="left:818px;width:91px"><span class="n nc">Ressource</span></div>
<div class="h" style="left:909px;width:61px"><span class="n nc">Dispo ?</span></div>
<div class="h" style="left:970px;width:91px;justify-content:flex-start;padding-left:6px"><span class="n">Tot. Fabriq.</span></div>
 <div style="position:absolute;left:0;top:-69px">
 <div class="gr" style="top:92px"><div class="rh"></div><div class="c" style="left:42px;width:171px"><span class="n">A21220001001</span></div><div class="c" style="left:214px;width:89px"><span class="n">ALU</span></div><div class="c" style="left:304px;width:211px"><span class="n">A21220001001</span></div><div class="c" style="left:516px;width:200px"><span class="n">Fenêtre aluminum</span></div><div class="c" style="left:717px;width:101px"><span class="n"></span></div><div class="c" style="left:819px;width:90px"><span class="n">ALU</span></div><div class="c cc" style="left:910px;width:60px"><svg class="cb" width="16" height="16" viewBox="0 0 16 16"><rect x=".75" y=".75" width="14.5" height="14.5" fill="#fff" stroke="#4a4a4a" stroke-width="1.4"/><path d="M3.3 8.3l3.1 3.3 6.4-7.4" fill="none" stroke="#555" stroke-width="1.3"/></svg></div><div class="c cc" style="left:971px;width:90px"><svg class="cb" width="16" height="16" viewBox="0 0 16 16"><rect x=".75" y=".75" width="14.5" height="14.5" fill="#fff" stroke="#4a4a4a" stroke-width="1.4"/><path d="M3.3 8.3l3.1 3.3 6.4-7.4" fill="none" stroke="#555" stroke-width="1.3"/></svg></div></div>
<div class="gr alt" style="top:112px"><div class="rh"></div><div class="c" style="left:42px;width:171px"><span class="n">A21220001002</span></div><div class="c" style="left:214px;width:89px"><span class="n">ALU</span></div><div class="c" style="left:304px;width:211px"><span class="n">A21220001002</span></div><div class="c" style="left:516px;width:200px"><span class="n"></span></div><div class="c" style="left:717px;width:101px"><span class="n"></span></div><div class="c" style="left:819px;width:90px"><span class="n">ALU</span></div><div class="c cc" style="left:910px;width:60px"><svg class="cb" width="16" height="16" viewBox="0 0 16 16"><rect x=".75" y=".75" width="14.5" height="14.5" fill="#fff" stroke="#4a4a4a" stroke-width="1.4"/><path d="M3.3 8.3l3.1 3.3 6.4-7.4" fill="none" stroke="#555" stroke-width="1.3"/></svg></div><div class="c cc" style="left:971px;width:90px"><svg class="cb" width="16" height="16" viewBox="0 0 16 16"><rect x=".75" y=".75" width="14.5" height="14.5" fill="#fff" stroke="#4a4a4a" stroke-width="1.4"/><path d="M3.3 8.3l3.1 3.3 6.4-7.4" fill="none" stroke="#555" stroke-width="1.3"/></svg></div></div>
<div class="gr" style="top:132px"><div class="rh"></div><div class="c" style="left:42px;width:171px"><span class="n">A21300001001</span></div><div class="c" style="left:214px;width:89px"><span class="n">ALU</span></div><div class="c" style="left:304px;width:211px"><span class="n">A21300001001</span></div><div class="c" style="left:516px;width:200px"><span class="n"></span></div><div class="c" style="left:717px;width:101px"><span class="n"></span></div><div class="c" style="left:819px;width:90px"><span class="n">ALU</span></div><div class="c cc" style="left:910px;width:60px"><svg class="cb" width="16" height="16" viewBox="0 0 16 16"><rect x=".75" y=".75" width="14.5" height="14.5" fill="#fff" stroke="#4a4a4a" stroke-width="1.4"/><path d="M3.3 8.3l3.1 3.3 6.4-7.4" fill="none" stroke="#555" stroke-width="1.3"/></svg></div><div class="c cc" style="left:971px;width:90px"><svg class="cb" width="16" height="16" viewBox="0 0 16 16"><rect x=".75" y=".75" width="14.5" height="14.5" fill="#fff" stroke="#4a4a4a" stroke-width="1.4"/></svg></div></div>
<div class="gr alt" style="top:152px"><div class="rh"></div><div class="c" style="left:42px;width:171px"><span class="n">23340001001</span></div><div class="c" style="left:214px;width:89px"><span class="n">DEBUT</span></div><div class="c" style="left:304px;width:211px"><span class="n">23340001001</span></div><div class="c" style="left:516px;width:200px"><span class="n"></span></div><div class="c" style="left:717px;width:101px"><span class="n"></span></div><div class="c" style="left:819px;width:90px"><span class="n">ALU</span></div><div class="c cc" style="left:910px;width:60px"><svg class="cb" width="16" height="16" viewBox="0 0 16 16"><rect x=".75" y=".75" width="14.5" height="14.5" fill="#fff" stroke="#4a4a4a" stroke-width="1.4"/><path d="M3.3 8.3l3.1 3.3 6.4-7.4" fill="none" stroke="#555" stroke-width="1.3"/></svg></div><div class="c cc" style="left:971px;width:90px"><svg class="cb" width="16" height="16" viewBox="0 0 16 16"><rect x=".75" y=".75" width="14.5" height="14.5" fill="#fff" stroke="#4a4a4a" stroke-width="1.4"/></svg></div></div>
<div class="gr" style="top:172px"><div class="rh"></div><div class="c" style="left:42px;width:171px"><span class="n">23340002001</span></div><div class="c" style="left:214px;width:89px"><span class="n">DEBUT</span></div><div class="c" style="left:304px;width:211px"><span class="n">23340002001</span></div><div class="c" style="left:516px;width:200px"><span class="n"></span></div><div class="c" style="left:717px;width:101px"><span class="n"></span></div><div class="c" style="left:819px;width:90px"><span class="n">ALU</span></div><div class="c cc" style="left:910px;width:60px"><svg class="cb" width="16" height="16" viewBox="0 0 16 16"><rect x=".75" y=".75" width="14.5" height="14.5" fill="#fff" stroke="#4a4a4a" stroke-width="1.4"/><path d="M3.3 8.3l3.1 3.3 6.4-7.4" fill="none" stroke="#555" stroke-width="1.3"/></svg></div><div class="c cc" style="left:971px;width:90px"><svg class="cb" width="16" height="16" viewBox="0 0 16 16"><rect x=".75" y=".75" width="14.5" height="14.5" fill="#fff" stroke="#4a4a4a" stroke-width="1.4"/></svg></div></div>
<div class="gr alt" style="top:192px"><div class="rh cur"></div><div class="c" style="left:42px;width:171px"><span class="n">23340003001</span></div><div class="c" style="left:214px;width:89px"><span class="n">DEBUT</span></div><div class="c" style="left:304px;width:211px"><span class="n">23340003001</span></div><div class="c" style="left:516px;width:200px"><span class="n"></span></div><div class="c" style="left:717px;width:101px"><span class="n"></span></div><div class="c" style="left:819px;width:90px"><span class="n">ALU</span></div><div class="c cc" style="left:910px;width:60px"><svg class="cb" width="16" height="16" viewBox="0 0 16 16"><rect x=".75" y=".75" width="14.5" height="14.5" fill="#fff" stroke="#4a4a4a" stroke-width="1.4"/><path d="M3.3 8.3l3.1 3.3 6.4-7.4" fill="none" stroke="#555" stroke-width="1.3"/></svg></div><div class="c cc" style="left:971px;width:90px"><svg class="cb" width="16" height="16" viewBox="0 0 16 16"><rect x=".75" y=".75" width="14.5" height="14.5" fill="#fff" stroke="#4a4a4a" stroke-width="1.4"/></svg></div></div>
<div class="gr" style="top:212px"><div class="rh"></div><div class="c" style="left:42px;width:171px"><span class="n">A23330001001</span></div><div class="c" style="left:214px;width:89px"><span class="n">ALU</span></div><div class="c" style="left:304px;width:211px"><span class="n">A23330001001</span></div><div class="c" style="left:516px;width:200px"><span class="n"></span></div><div class="c" style="left:717px;width:101px"><span class="n"></span></div><div class="c" style="left:819px;width:90px"><span class="n">ALU</span></div><div class="c cc" style="left:910px;width:60px"><svg class="cb" width="16" height="16" viewBox="0 0 16 16"><rect x=".75" y=".75" width="14.5" height="14.5" fill="#fff" stroke="#4a4a4a" stroke-width="1.4"/><path d="M3.3 8.3l3.1 3.3 6.4-7.4" fill="none" stroke="#555" stroke-width="1.3"/></svg></div><div class="c cc" style="left:971px;width:90px"><svg class="cb" width="16" height="16" viewBox="0 0 16 16"><rect x=".75" y=".75" width="14.5" height="14.5" fill="#fff" stroke="#4a4a4a" stroke-width="1.4"/></svg></div></div>
<div class="gr alt" style="top:232px"><div class="rh"></div><div class="c" style="left:42px;width:171px"><span class="n">23340006001</span></div><div class="c" style="left:214px;width:89px"><span class="n">DEBUT</span></div><div class="c" style="left:304px;width:211px"><span class="n">23340006001</span></div><div class="c" style="left:516px;width:200px"><span class="n"></span></div><div class="c" style="left:717px;width:101px"><span class="n"></span></div><div class="c" style="left:819px;width:90px"><span class="n">ALU</span></div><div class="c cc" style="left:910px;width:60px"><svg class="cb" width="16" height="16" viewBox="0 0 16 16"><rect x=".75" y=".75" width="14.5" height="14.5" fill="#fff" stroke="#4a4a4a" stroke-width="1.4"/><path d="M3.3 8.3l3.1 3.3 6.4-7.4" fill="none" stroke="#555" stroke-width="1.3"/></svg></div><div class="c cc" style="left:971px;width:90px"><svg class="cb" width="16" height="16" viewBox="0 0 16 16"><rect x=".75" y=".75" width="14.5" height="14.5" fill="#fff" stroke="#4a4a4a" stroke-width="1.4"/></svg></div></div>
<div class="gr" style="top:252px"><div class="rh"></div><div class="c" style="left:42px;width:171px"><span class="n">23340007001</span></div><div class="c" style="left:214px;width:89px"><span class="n">DEBUT</span></div><div class="c" style="left:304px;width:211px"><span class="n">23340007001</span></div><div class="c" style="left:516px;width:200px"><span class="n"></span></div><div class="c" style="left:717px;width:101px"><span class="n"></span></div><div class="c" style="left:819px;width:90px"><span class="n">ALU</span></div><div class="c cc" style="left:910px;width:60px"><svg class="cb" width="16" height="16" viewBox="0 0 16 16"><rect x=".75" y=".75" width="14.5" height="14.5" fill="#fff" stroke="#4a4a4a" stroke-width="1.4"/><path d="M3.3 8.3l3.1 3.3 6.4-7.4" fill="none" stroke="#555" stroke-width="1.3"/></svg></div><div class="c cc" style="left:971px;width:90px"><svg class="cb" width="16" height="16" viewBox="0 0 16 16"><rect x=".75" y=".75" width="14.5" height="14.5" fill="#fff" stroke="#4a4a4a" stroke-width="1.4"/></svg></div></div>
<div class="gr alt" style="top:272px"><div class="rh"></div><div class="c" style="left:42px;width:171px"><span class="n">23340008001</span></div><div class="c" style="left:214px;width:89px"><span class="n">DEBUT</span></div><div class="c" style="left:304px;width:211px"><span class="n">23340008001</span></div><div class="c" style="left:516px;width:200px"><span class="n"></span></div><div class="c" style="left:717px;width:101px"><span class="n"></span></div><div class="c" style="left:819px;width:90px"><span class="n">ALU</span></div><div class="c cc" style="left:910px;width:60px"><svg class="cb" width="16" height="16" viewBox="0 0 16 16"><rect x=".75" y=".75" width="14.5" height="14.5" fill="#fff" stroke="#4a4a4a" stroke-width="1.4"/><path d="M3.3 8.3l3.1 3.3 6.4-7.4" fill="none" stroke="#555" stroke-width="1.3"/></svg></div><div class="c cc" style="left:971px;width:90px"><svg class="cb" width="16" height="16" viewBox="0 0 16 16"><rect x=".75" y=".75" width="14.5" height="14.5" fill="#fff" stroke="#4a4a4a" stroke-width="1.4"/></svg></div></div>
<div class="gr" style="top:292px"><div class="rh"></div><div class="c" style="left:42px;width:171px"><span class="n">23340009001</span></div><div class="c" style="left:214px;width:89px"><span class="n">DEBUT</span></div><div class="c" style="left:304px;width:211px"><span class="n">23340009001</span></div><div class="c" style="left:516px;width:200px"><span class="n"></span></div><div class="c" style="left:717px;width:101px"><span class="n"></span></div><div class="c" style="left:819px;width:90px"><span class="n">ALU</span></div><div class="c cc" style="left:910px;width:60px"><svg class="cb" width="16" height="16" viewBox="0 0 16 16"><rect x=".75" y=".75" width="14.5" height="14.5" fill="#fff" stroke="#4a4a4a" stroke-width="1.4"/><path d="M3.3 8.3l3.1 3.3 6.4-7.4" fill="none" stroke="#555" stroke-width="1.3"/></svg></div><div class="c cc" style="left:971px;width:90px"><svg class="cb" width="16" height="16" viewBox="0 0 16 16"><rect x=".75" y=".75" width="14.5" height="14.5" fill="#fff" stroke="#4a4a4a" stroke-width="1.4"/></svg></div></div>
<div class="gr alt" style="top:312px"><div class="rh"></div><div class="c" style="left:42px;width:171px"><span class="n">2334001</span></div><div class="c" style="left:214px;width:89px"><span class="n">DEBUT</span></div><div class="c" style="left:304px;width:211px"><span class="n">2334001</span></div><div class="c" style="left:516px;width:200px"><span class="n"></span></div><div class="c" style="left:717px;width:101px"><span class="n"></span></div><div class="c" style="left:819px;width:90px"><span class="n">ALU</span></div><div class="c cc" style="left:910px;width:60px"><svg class="cb" width="16" height="16" viewBox="0 0 16 16"><rect x=".75" y=".75" width="14.5" height="14.5" fill="#fff" stroke="#4a4a4a" stroke-width="1.4"/><path d="M3.3 8.3l3.1 3.3 6.4-7.4" fill="none" stroke="#555" stroke-width="1.3"/></svg></div><div class="c cc" style="left:971px;width:90px"><svg class="cb" width="16" height="16" viewBox="0 0 16 16"><rect x=".75" y=".75" width="14.5" height="14.5" fill="#fff" stroke="#4a4a4a" stroke-width="1.4"/></svg></div></div>
<div class="gr" style="top:332px"><div class="rh"></div><div class="c" style="left:42px;width:171px"><span class="n">23340010001</span></div><div class="c" style="left:214px;width:89px"><span class="n">DEBUT</span></div><div class="c" style="left:304px;width:211px"><span class="n">23340010001</span></div><div class="c" style="left:516px;width:200px"><span class="n"></span></div><div class="c" style="left:717px;width:101px"><span class="n"></span></div><div class="c" style="left:819px;width:90px"><span class="n">ALU</span></div><div class="c cc" style="left:910px;width:60px"><svg class="cb" width="16" height="16" viewBox="0 0 16 16"><rect x=".75" y=".75" width="14.5" height="14.5" fill="#fff" stroke="#4a4a4a" stroke-width="1.4"/><path d="M3.3 8.3l3.1 3.3 6.4-7.4" fill="none" stroke="#555" stroke-width="1.3"/></svg></div><div class="c cc" style="left:971px;width:90px"><svg class="cb" width="16" height="16" viewBox="0 0 16 16"><rect x=".75" y=".75" width="14.5" height="14.5" fill="#fff" stroke="#4a4a4a" stroke-width="1.4"/></svg></div></div>
<div class="gr alt" style="top:352px"><div class="rh"></div><div class="c" style="left:42px;width:171px"><span class="n">T2335005</span></div><div class="c" style="left:214px;width:89px"><span class="n">DEBUT</span></div><div class="c" style="left:304px;width:211px"><span class="n">T2335005</span></div><div class="c" style="left:516px;width:200px"><span class="n"></span></div><div class="c" style="left:717px;width:101px"><span class="n"></span></div><div class="c" style="left:819px;width:90px"><span class="n">ALU</span></div><div class="c cc" style="left:910px;width:60px"><svg class="cb" width="16" height="16" viewBox="0 0 16 16"><rect x=".75" y=".75" width="14.5" height="14.5" fill="#fff" stroke="#4a4a4a" stroke-width="1.4"/><path d="M3.3 8.3l3.1 3.3 6.4-7.4" fill="none" stroke="#555" stroke-width="1.3"/></svg></div><div class="c cc" style="left:971px;width:90px"><svg class="cb" width="16" height="16" viewBox="0 0 16 16"><rect x=".75" y=".75" width="14.5" height="14.5" fill="#fff" stroke="#4a4a4a" stroke-width="1.4"/></svg></div></div>
<div class="gr" style="top:372px"><div class="rh"></div><div class="c" style="left:42px;width:171px"><span class="n">23340005001</span></div><div class="c" style="left:214px;width:89px"><span class="n">DEBUT</span></div><div class="c" style="left:304px;width:211px"><span class="n">23340005001</span></div><div class="c" style="left:516px;width:200px"><span class="n"></span></div><div class="c" style="left:717px;width:101px"><span class="n"></span></div><div class="c" style="left:819px;width:90px"><span class="n">ALU</span></div><div class="c cc" style="left:910px;width:60px"><svg class="cb" width="16" height="16" viewBox="0 0 16 16"><rect x=".75" y=".75" width="14.5" height="14.5" fill="#fff" stroke="#4a4a4a" stroke-width="1.4"/><path d="M3.3 8.3l3.1 3.3 6.4-7.4" fill="none" stroke="#555" stroke-width="1.3"/></svg></div><div class="c cc" style="left:971px;width:90px"><svg class="cb" width="16" height="16" viewBox="0 0 16 16"><rect x=".75" y=".75" width="14.5" height="14.5" fill="#fff" stroke="#4a4a4a" stroke-width="1.4"/></svg></div></div>
<div class="gr alt" style="top:392px"><div class="rh"></div><div class="c" style="left:42px;width:171px"><span class="n">23350005001</span></div><div class="c" style="left:214px;width:89px"><span class="n">DEBUT</span></div><div class="c" style="left:304px;width:211px"><span class="n">23350005001</span></div><div class="c" style="left:516px;width:200px"><span class="n"></span></div><div class="c" style="left:717px;width:101px"><span class="n"></span></div><div class="c" style="left:819px;width:90px"><span class="n">ALU</span></div><div class="c cc" style="left:910px;width:60px"><svg class="cb" width="16" height="16" viewBox="0 0 16 16"><rect x=".75" y=".75" width="14.5" height="14.5" fill="#fff" stroke="#4a4a4a" stroke-width="1.4"/><path d="M3.3 8.3l3.1 3.3 6.4-7.4" fill="none" stroke="#555" stroke-width="1.3"/></svg></div><div class="c cc" style="left:971px;width:90px"><svg class="cb" width="16" height="16" viewBox="0 0 16 16"><rect x=".75" y=".75" width="14.5" height="14.5" fill="#fff" stroke="#4a4a4a" stroke-width="1.4"/></svg></div></div>
<div class="gr" style="top:412px"><div class="rh"></div><div class="c" style="left:42px;width:171px"><span class="n">23350007001</span></div><div class="c" style="left:214px;width:89px"><span class="n">DEBUT</span></div><div class="c" style="left:304px;width:211px"><span class="n">23350007001</span></div><div class="c" style="left:516px;width:200px"><span class="n"></span></div><div class="c" style="left:717px;width:101px"><span class="n"></span></div><div class="c" style="left:819px;width:90px"><span class="n">ALU</span></div><div class="c cc" style="left:910px;width:60px"><svg class="cb" width="16" height="16" viewBox="0 0 16 16"><rect x=".75" y=".75" width="14.5" height="14.5" fill="#fff" stroke="#4a4a4a" stroke-width="1.4"/><path d="M3.3 8.3l3.1 3.3 6.4-7.4" fill="none" stroke="#555" stroke-width="1.3"/></svg></div><div class="c cc" style="left:971px;width:90px"><svg class="cb" width="16" height="16" viewBox="0 0 16 16"><rect x=".75" y=".75" width="14.5" height="14.5" fill="#fff" stroke="#4a4a4a" stroke-width="1.4"/></svg></div></div>
<div class="gr alt" style="top:432px"><div class="rh"></div><div class="c" style="left:42px;width:171px"><span class="n">T2335003</span></div><div class="c" style="left:214px;width:89px"><span class="n">DEBUT</span></div><div class="c" style="left:304px;width:211px"><span class="n">T2335003</span></div><div class="c" style="left:516px;width:200px"><span class="n"></span></div><div class="c" style="left:717px;width:101px"><span class="n"></span></div><div class="c" style="left:819px;width:90px"><span class="n">ALU</span></div><div class="c cc" style="left:910px;width:60px"><svg class="cb" width="16" height="16" viewBox="0 0 16 16"><rect x=".75" y=".75" width="14.5" height="14.5" fill="#fff" stroke="#4a4a4a" stroke-width="1.4"/><path d="M3.3 8.3l3.1 3.3 6.4-7.4" fill="none" stroke="#555" stroke-width="1.3"/></svg></div><div class="c cc" style="left:971px;width:90px"><svg class="cb" width="16" height="16" viewBox="0 0 16 16"><rect x=".75" y=".75" width="14.5" height="14.5" fill="#fff" stroke="#4a4a4a" stroke-width="1.4"/></svg></div></div>
<div class="gr" style="top:452px"><div class="rh"></div><div class="c" style="left:42px;width:171px"><span class="n">T2335004</span></div><div class="c" style="left:214px;width:89px"><span class="n">DEBUT</span></div><div class="c" style="left:304px;width:211px"><span class="n">T2335004</span></div><div class="c" style="left:516px;width:200px"><span class="n"></span></div><div class="c" style="left:717px;width:101px"><span class="n"></span></div><div class="c" style="left:819px;width:90px"><span class="n">ALU</span></div><div class="c cc" style="left:910px;width:60px"><svg class="cb" width="16" height="16" viewBox="0 0 16 16"><rect x=".75" y=".75" width="14.5" height="14.5" fill="#fff" stroke="#4a4a4a" stroke-width="1.4"/><path d="M3.3 8.3l3.1 3.3 6.4-7.4" fill="none" stroke="#555" stroke-width="1.3"/></svg></div><div class="c cc" style="left:971px;width:90px"><svg class="cb" width="16" height="16" viewBox="0 0 16 16"><rect x=".75" y=".75" width="14.5" height="14.5" fill="#fff" stroke="#4a4a4a" stroke-width="1.4"/></svg></div></div>
<div class="gr alt" style="top:472px"><div class="rh"></div><div class="c" style="left:42px;width:171px"><span class="n">T2335002</span></div><div class="c" style="left:214px;width:89px"><span class="n">DEBUT</span></div><div class="c" style="left:304px;width:211px"><span class="n">T2335002</span></div><div class="c" style="left:516px;width:200px"><span class="n"></span></div><div class="c" style="left:717px;width:101px"><span class="n"></span></div><div class="c" style="left:819px;width:90px"><span class="n">ALU</span></div><div class="c cc" style="left:910px;width:60px"><svg class="cb" width="16" height="16" viewBox="0 0 16 16"><rect x=".75" y=".75" width="14.5" height="14.5" fill="#fff" stroke="#4a4a4a" stroke-width="1.4"/><path d="M3.3 8.3l3.1 3.3 6.4-7.4" fill="none" stroke="#555" stroke-width="1.3"/></svg></div><div class="c cc" style="left:971px;width:90px"><svg class="cb" width="16" height="16" viewBox="0 0 16 16"><rect x=".75" y=".75" width="14.5" height="14.5" fill="#fff" stroke="#4a4a4a" stroke-width="1.4"/></svg></div></div>
<div class="gr" style="top:492px"><div class="rh"></div><div class="c" style="left:42px;width:171px"><span class="n">23350003001</span></div><div class="c" style="left:214px;width:89px"><span class="n">DEBUT</span></div><div class="c" style="left:304px;width:211px"><span class="n">23350003001</span></div><div class="c" style="left:516px;width:200px"><span class="n"></span></div><div class="c" style="left:717px;width:101px"><span class="n"></span></div><div class="c" style="left:819px;width:90px"><span class="n">ALU</span></div><div class="c cc" style="left:910px;width:60px"><svg class="cb" width="16" height="16" viewBox="0 0 16 16"><rect x=".75" y=".75" width="14.5" height="14.5" fill="#fff" stroke="#4a4a4a" stroke-width="1.4"/><path d="M3.3 8.3l3.1 3.3 6.4-7.4" fill="none" stroke="#555" stroke-width="1.3"/></svg></div><div class="c cc" style="left:971px;width:90px"><svg class="cb" width="16" height="16" viewBox="0 0 16 16"><rect x=".75" y=".75" width="14.5" height="14.5" fill="#fff" stroke="#4a4a4a" stroke-width="1.4"/></svg></div></div>
<div class="gr alt" style="top:512px"><div class="rh"></div><div class="c" style="left:42px;width:171px"><span class="n">23350004001</span></div><div class="c" style="left:214px;width:89px"><span class="n">DEBUT</span></div><div class="c" style="left:304px;width:211px"><span class="n">23350004001</span></div><div class="c" style="left:516px;width:200px"><span class="n"></span></div><div class="c" style="left:717px;width:101px"><span class="n"></span></div><div class="c" style="left:819px;width:90px"><span class="n">ALU</span></div><div class="c cc" style="left:910px;width:60px"><svg class="cb" width="16" height="16" viewBox="0 0 16 16"><rect x=".75" y=".75" width="14.5" height="14.5" fill="#fff" stroke="#4a4a4a" stroke-width="1.4"/><path d="M3.3 8.3l3.1 3.3 6.4-7.4" fill="none" stroke="#555" stroke-width="1.3"/></svg></div><div class="c cc" style="left:971px;width:90px"><svg class="cb" width="16" height="16" viewBox="0 0 16 16"><rect x=".75" y=".75" width="14.5" height="14.5" fill="#fff" stroke="#4a4a4a" stroke-width="1.4"/></svg></div></div>
<div class="gr" style="top:532px"><div class="rh"></div><div class="c" style="left:42px;width:171px"><span class="n">T2335001</span></div><div class="c" style="left:214px;width:89px"><span class="n">DEBUT</span></div><div class="c" style="left:304px;width:211px"><span class="n">T2335001</span></div><div class="c" style="left:516px;width:200px"><span class="n"></span></div><div class="c" style="left:717px;width:101px"><span class="n"></span></div><div class="c" style="left:819px;width:90px"><span class="n">ALU</span></div><div class="c cc" style="left:910px;width:60px"><svg class="cb" width="16" height="16" viewBox="0 0 16 16"><rect x=".75" y=".75" width="14.5" height="14.5" fill="#fff" stroke="#4a4a4a" stroke-width="1.4"/><path d="M3.3 8.3l3.1 3.3 6.4-7.4" fill="none" stroke="#555" stroke-width="1.3"/></svg></div><div class="c cc" style="left:971px;width:90px"><svg class="cb" width="16" height="16" viewBox="0 0 16 16"><rect x=".75" y=".75" width="14.5" height="14.5" fill="#fff" stroke="#4a4a4a" stroke-width="1.4"/></svg></div></div>
<div class="gr alt" style="top:552px"><div class="rh"></div><div class="c" style="left:42px;width:171px"><span class="n">23350006001</span></div><div class="c" style="left:214px;width:89px"><span class="n">DEBUT</span></div><div class="c" style="left:304px;width:211px"><span class="n">23350006001</span></div><div class="c" style="left:516px;width:200px"><span class="n"></span></div><div class="c" style="left:717px;width:101px"><span class="n"></span></div><div class="c" style="left:819px;width:90px"><span class="n">ALU</span></div><div class="c cc" style="left:910px;width:60px"><svg class="cb" width="16" height="16" viewBox="0 0 16 16"><rect x=".75" y=".75" width="14.5" height="14.5" fill="#fff" stroke="#4a4a4a" stroke-width="1.4"/><path d="M3.3 8.3l3.1 3.3 6.4-7.4" fill="none" stroke="#555" stroke-width="1.3"/></svg></div><div class="c cc" style="left:971px;width:90px"><svg class="cb" width="16" height="16" viewBox="0 0 16 16"><rect x=".75" y=".75" width="14.5" height="14.5" fill="#fff" stroke="#4a4a4a" stroke-width="1.4"/></svg></div></div>
<div class="gr" style="top:572px"><div class="rh"></div><div class="c" style="left:42px;width:171px"><span class="n">23350008001</span></div><div class="c" style="left:214px;width:89px"><span class="n">DEBUT</span></div><div class="c" style="left:304px;width:211px"><span class="n">23350008001</span></div><div class="c" style="left:516px;width:200px"><span class="n"></span></div><div class="c" style="left:717px;width:101px"><span class="n"></span></div><div class="c" style="left:819px;width:90px"><span class="n">ALU</span></div><div class="c cc" style="left:910px;width:60px"><svg class="cb" width="16" height="16" viewBox="0 0 16 16"><rect x=".75" y=".75" width="14.5" height="14.5" fill="#fff" stroke="#4a4a4a" stroke-width="1.4"/><path d="M3.3 8.3l3.1 3.3 6.4-7.4" fill="none" stroke="#555" stroke-width="1.3"/></svg></div><div class="c cc" style="left:971px;width:90px"><svg class="cb" width="16" height="16" viewBox="0 0 16 16"><rect x=".75" y=".75" width="14.5" height="14.5" fill="#fff" stroke="#4a4a4a" stroke-width="1.4"/></svg></div></div>
<div class="gr alt" style="top:592px"><div class="rh"></div><div class="c" style="left:42px;width:171px"><span class="n">23350002001</span></div><div class="c" style="left:214px;width:89px"><span class="n">DEBUT</span></div><div class="c" style="left:304px;width:211px"><span class="n">23350002001</span></div><div class="c" style="left:516px;width:200px"><span class="n"></span></div><div class="c" style="left:717px;width:101px"><span class="n"></span></div><div class="c" style="left:819px;width:90px"><span class="n">ALU</span></div><div class="c cc" style="left:910px;width:60px"><svg class="cb" width="16" height="16" viewBox="0 0 16 16"><rect x=".75" y=".75" width="14.5" height="14.5" fill="#fff" stroke="#4a4a4a" stroke-width="1.4"/><path d="M3.3 8.3l3.1 3.3 6.4-7.4" fill="none" stroke="#555" stroke-width="1.3"/></svg></div><div class="c cc" style="left:971px;width:90px"><svg class="cb" width="16" height="16" viewBox="0 0 16 16"><rect x=".75" y=".75" width="14.5" height="14.5" fill="#fff" stroke="#4a4a4a" stroke-width="1.4"/></svg></div></div>
<div class="gr" style="top:612px"><div class="rh"></div><div class="c" style="left:42px;width:171px"><span class="n">23360001001</span></div><div class="c" style="left:214px;width:89px"><span class="n">DEBUT</span></div><div class="c" style="left:304px;width:211px"><span class="n">23360001001</span></div><div class="c" style="left:516px;width:200px"><span class="n"></span></div><div class="c" style="left:717px;width:101px"><span class="n"></span></div><div class="c" style="left:819px;width:90px"><span class="n">ALU</span></div><div class="c cc" style="left:910px;width:60px"><svg class="cb" width="16" height="16" viewBox="0 0 16 16"><rect x=".75" y=".75" width="14.5" height="14.5" fill="#fff" stroke="#4a4a4a" stroke-width="1.4"/><path d="M3.3 8.3l3.1 3.3 6.4-7.4" fill="none" stroke="#555" stroke-width="1.3"/></svg></div><div class="c cc" style="left:971px;width:90px"><svg class="cb" width="16" height="16" viewBox="0 0 16 16"><rect x=".75" y=".75" width="14.5" height="14.5" fill="#fff" stroke="#4a4a4a" stroke-width="1.4"/></svg></div></div>
<div class="gr alt" style="top:632px"><div class="rh"></div><div class="c" style="left:42px;width:171px"><span class="n">23360002001</span></div><div class="c" style="left:214px;width:89px"><span class="n">DEBUT</span></div><div class="c" style="left:304px;width:211px"><span class="n">23360002001</span></div><div class="c" style="left:516px;width:200px"><span class="n"></span></div><div class="c" style="left:717px;width:101px"><span class="n"></span></div><div class="c" style="left:819px;width:90px"><span class="n">ALU</span></div><div class="c cc" style="left:910px;width:60px"><svg class="cb" width="16" height="16" viewBox="0 0 16 16"><rect x=".75" y=".75" width="14.5" height="14.5" fill="#fff" stroke="#4a4a4a" stroke-width="1.4"/><path d="M3.3 8.3l3.1 3.3 6.4-7.4" fill="none" stroke="#555" stroke-width="1.3"/></svg></div><div class="c cc" style="left:971px;width:90px"><svg class="cb" width="16" height="16" viewBox="0 0 16 16"><rect x=".75" y=".75" width="14.5" height="14.5" fill="#fff" stroke="#4a4a4a" stroke-width="1.4"/></svg></div></div>
 </div>
</div></div>
<!-- clipped designation text (row 2) -->
<div class="abs" style="left:1264px;top:112px;width:17px;height:19px;overflow:hidden;line-height:20px"><span class="n" style="position:absolute;left:1px">r S</span></div>
<!-- focused cell -->
<div class="abs" style="left:868px;top:191px;width:14px;height:21px;border:2px solid #000;border-right:none"></div>

<!-- context menu -->
<div class="menu abs" style="left:879px;top:113px;width:385px;height:540px">
<div class="mi"><span style="letter-spacing:0.043px">Actualiser</span></div>
<div class="ms"></div>
<div class="mi"><span style="letter-spacing:-0.074px">Déclaration Manuelle (F1)</span></div>
<div class="mi dis"><span style="letter-spacing:0.064px">Déclaration Manuelle Complète (Maj+F1)</span></div>
<div class="mi"><span style="letter-spacing:-0.213px">Déclaration Auto. Reste à Fab. (F9)</span></div>
<div class="mi"><span style="letter-spacing:0.066px">Déclaration Auto. Qté. Cond.</span></div>
<div class="mi"><span style="letter-spacing:-0.081px">Déclaration Surplus</span></div>
<div class="mi"><span style="letter-spacing:-0.056px">Déclaration Rebut</span></div>
<div class="mi"><span style="letter-spacing:-0.032px">Déclaration Retour</span></div>
<div class="mi"><span style="letter-spacing:-0.348px">Solde Etape</span></div>
<div class="ms"></div>
<div class="mi hl"><span style="letter-spacing:0.008px">Affectation RL</span><svg class="ar" width="7" height="10" viewBox="0 0 7 10"><path d="M1.2 0.8l4.2 4.2-4.2 4.2" fill="none" stroke="#3a424c" stroke-width="1.5"/></svg></div>
<div class="mi"><span style="letter-spacing:0.017px">Affectation Sous-Traitance</span><svg class="ar" width="7" height="10" viewBox="0 0 7 10"><path d="M1.2 0.8l4.2 4.2-4.2 4.2" fill="none" stroke="#3a424c" stroke-width="1.5"/></svg></div>
<div class="mi"><span style="letter-spacing:0.246px">Affectation Substitution</span><svg class="ar" width="7" height="10" viewBox="0 0 7 10"><path d="M1.2 0.8l4.2 4.2-4.2 4.2" fill="none" stroke="#3a424c" stroke-width="1.5"/></svg></div>
<div class="ms"></div>
<div class="mi"><span style="letter-spacing:0.04px">Ordonnancement (F11)</span></div>
<div class="mi"><span style="letter-spacing:-0.038px">Reset Ordonnancement (Maj+F11)</span></div>
<div class="ms"></div>
<div class="mi"><span style="letter-spacing:-0.091px">Informations Suivies (F3)</span></div>
<div class="ms"></div>
<div class="mi"><span style="letter-spacing:0.07px">Déclaration Co-Produits</span></div>
<div class="ms"></div>
<div class="mi"><span style="letter-spacing:-0.119px">Consultation Charge Ressource</span><svg class="ar" width="7" height="10" viewBox="0 0 7 10"><path d="M1.2 0.8l4.2 4.2-4.2 4.2" fill="none" stroke="#3a424c" stroke-width="1.5"/></svg></div>
<div class="ms"></div>
</div>
<div class="menu abs sub" style="left:1256px;top:378px;width:326px;height:189px">
<div class="mi"><span style="letter-spacing:-0.098px">Création RL / Sélection (Maj+F9)</span></div>
<div class="mi"><span style="letter-spacing:-0.084px">Choix RL / Sélection (Maj+F2)</span></div>
<div class="mi"><span style="letter-spacing:-0.148px">Détachement RL (Maj+F6)</span></div>
<div class="ms"></div>
<div class="mi"><span style="letter-spacing:0.1px">Affectation RL Partiel / Net</span></div>
<div class="mi"><span style="letter-spacing:0.11px">Affectation RL Partiel / Manuelle</span></div>
<div class="ms"></div>
<div class="mi hl"><span style="letter-spacing:-0.17px">Désaffectation RL Partiel</span></div>
</div>
<!-- cursor -->
<svg class="abs" style="left:1492px;top:551px" width="18.6" height="33.5" viewBox="0 0 20 36"><path d="M1.5 1.5V26l5.6-5.2 4.4 10.4 4-1.8-4.4-10.2h7.6z" fill="#fff" stroke="#000" stroke-width="1.6" stroke-linejoin="round"/></svg>
</body></html>
